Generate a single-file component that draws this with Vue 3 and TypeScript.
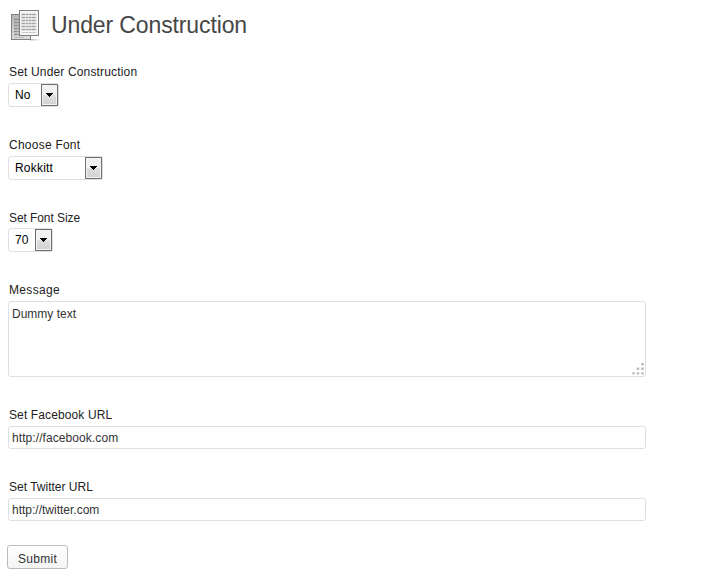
<script setup lang="ts">
import { ref } from 'vue'

interface SelectField {
  id: string
  label: string
  options: string[]
  value: string
  width: number
}

const selects = ref<SelectField[]>([
  { id: 'enabled', label: 'Set Under Construction', options: ['No', 'Yes'], value: 'No', width: 51 },
  { id: 'font', label: 'Choose Font', options: ['Rokkitt'], value: 'Rokkitt', width: 95 },
  { id: 'size', label: 'Set Font Size', options: ['70'], value: '70', width: 45 },
])
const message = ref('Dummy text')
const facebook = ref('http://facebook.com')
const twitter = ref('http://twitter.com')
const lines = [0, 3, 6, 9, 12, 15]
</script>

<template>
  <main class="page">
    <header class="heading">
      <svg class="icon" width="34" height="34" viewBox="0 0 34 34">
        <defs>
          <linearGradient id="back" x1="0" y1="0" x2="0" y2="1">
            <stop offset="0" stop-color="#b5b5b5" />
            <stop offset="1" stop-color="#dedede" />
          </linearGradient>
          <linearGradient id="shade" x1="0" y1="0" x2="1" y2="0">
            <stop offset="0" stop-color="#bbb" />
            <stop offset="1" stop-color="#fff" />
          </linearGradient>
        </defs>
        <rect x="22" y="31" width="11" height="1.5" fill="url(#shade)" />
        <rect x="3.5" y="6.5" width="19" height="25" fill="url(#back)" stroke="#808080" />
        <path v-for="y in lines" :key="'b' + y" :d="`M6 ${y + 11.5}h6`" stroke="#8c8c8c" stroke-width="1.3" stroke-dasharray="3 .4 2 .3" />
        <path d="M6 29.5h10" stroke="#b8b8b8" />
        <rect x="11.5" y="2.5" width="19" height="25" fill="#f5f5f5" stroke="#808080" />
        <path v-for="y in lines" :key="'f' + y" :d="`M13.5 ${y + 6.5}h15`" stroke="#a2a2a2" stroke-width="1.3" stroke-dasharray="4 .5 2 .4 3 .4" />
        <path d="M14 24.5h14" stroke="#c4c4c4" stroke-dasharray="3 .5" />
      </svg>
      <h1>Under Construction</h1>
    </header>

    <form @submit.prevent>
      <div v-for="field in selects" :key="field.id" class="field" :class="field.id">
        <label :for="field.id">{{ field.label }}</label>
        <div class="select" :style="{ width: field.width + 'px' }">
          <select :id="field.id" v-model="field.value">
            <option v-for="option in field.options" :key="option">{{ option }}</option>
          </select>
          <span class="drop">
            <svg width="7" height="4" viewBox="0 0 7 4" shape-rendering="crispEdges"><path d="M0 0h7v1h-1v1h-1v1h-1v1h-1v-1h-1v-1h-1v-1h-1z" /></svg>
          </span>
        </div>
      </div>

      <div class="field message">
        <label for="message">Message</label>
        <div class="area">
          <textarea id="message" v-model="message" spellcheck="false"></textarea>
          <svg class="grip" width="12" height="12" viewBox="0 0 12 12" fill="#b9b9b9">
            <path d="M9.3 0h2.4v2.4h-2.4zM4.8 4.6h2.4v2.4h-2.4zM9.3 4.6h2.4v2.4h-2.4zM.3 9.2h2.4v2.4h-2.4zM4.8 9.2h2.4v2.4h-2.4zM9.3 9.2h2.4v2.4h-2.4z" />
          </svg>
        </div>
      </div>
      <div class="field facebook">
        <label for="facebook">Set Facebook URL</label>
        <input id="facebook" v-model="facebook" type="text" spellcheck="false" />
      </div>
      <div class="field twitter">
        <label for="twitter">Set Twitter URL</label>
        <input id="twitter" v-model="twitter" type="text" spellcheck="false" />
      </div>
      <button type="submit">Submit</button>
    </form>
  </main>
</template>

<style>
body {
  background: #fff;
}
</style>

<style scoped>
.page {
  box-sizing: border-box;
  width: 708px;
  height: 586px;
  padding: 8px;
  overflow: hidden;
  font: 12px/16px 'Liberation Sans', Arial, sans-serif;
  color: #333;
}
.heading {
  display: flex;
  height: 56px;
}
.icon {
  flex: none;
}
h1 {
  margin: 0 0 0 9px;
  font-size: 23px;
  line-height: 34px;
  font-weight: 400;
  letter-spacing: -0.12px;
  color: #464646;
  white-space: nowrap;
}
.field {
  display: flex;
  flex-direction: column;
  align-items: flex-start;
  gap: 3px;
  margin-bottom: 30px;
}
.field.size {
  gap: 2px;
}
.field.twitter {
  margin-bottom: 24px;
}
label {
  margin-left: 1px;
  white-space: nowrap;
  letter-spacing: 0.16px;
  color: #222;
}
.font label {
  letter-spacing: 0.24px;
}
.size label {
  letter-spacing: -0.08px;
}
.message label {
  letter-spacing: 0.35px;
}
.facebook label {
  letter-spacing: 0.12px;
}
.twitter label {
  letter-spacing: 0;
}
.select {
  box-sizing: border-box;
  display: flex;
  height: 24px;
  border: 1px solid #dfdfdf;
  border-radius: 3px;
  background: #fff;
}
select,
textarea,
input,
button {
  box-sizing: border-box;
  margin: 0;
  font: inherit;
  letter-spacing: 0.2px;
  color: #333;
  background: #fff;
  outline: none;
}
select {
  appearance: none;
  flex: 1;
  min-width: 0;
  padding: 0 0 0 6px;
  border: 0;
  border-radius: 3px;
  color: #000;
}
.drop {
  box-sizing: border-box;
  display: flex;
  flex: none;
  align-items: center;
  justify-content: center;
  width: 17px;
  height: 22px;
  border: 1px solid #707070;
  background: linear-gradient(#f2f2f2 0 48%, #e0e0e0 52%, #d0d0d0);
  box-shadow: inset 0 0 0 1px #f3f3f3;
}
.area {
  position: relative;
  width: 638px;
  height: 76px;
}
textarea {
  display: block;
  width: 100%;
  height: 100%;
  padding: 4px 3px;
  border: 1px solid #dfdfdf;
  border-radius: 3px;
  letter-spacing: 0;
  resize: none;
}
.grip {
  position: absolute;
  right: 2px;
  bottom: 2px;
}
input {
  width: 638px;
  height: 23px;
  padding: 0 3px;
  border: 1px solid #dfdfdf;
  border-radius: 3px;
  letter-spacing: 0.08px;
}
.twitter input {
  letter-spacing: 0;
}
button {
  display: block;
  width: 61px;
  height: 24px;
  margin-left: -1px;
  padding: 3px 0 0;
  border: 1px solid #bbb;
  border-radius: 3px;
  letter-spacing: 0.3px;
  background: linear-gradient(#fefefe, #f4f4f4);
}
</style>
